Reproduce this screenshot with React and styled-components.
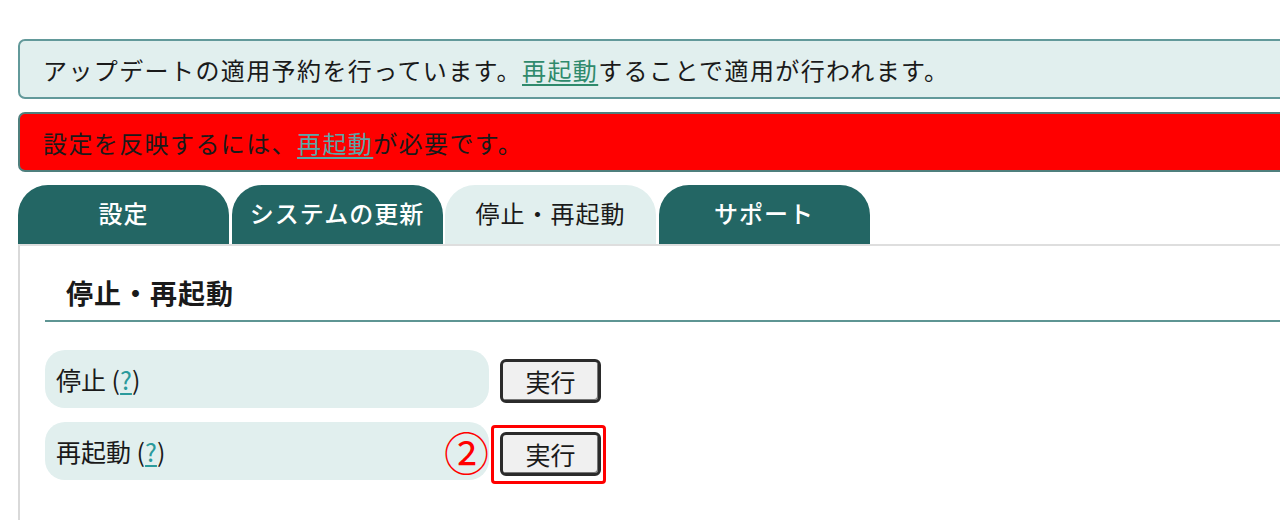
import React from 'react';
import styled, { createGlobalStyle } from 'styled-components';

const GlobalStyle = createGlobalStyle`
  html, body {
    margin: 0;
    padding: 0;
    background: #ffffff;
    overflow: hidden;
  }
  body {
    font-family: "Noto Sans CJK JP", "Noto Sans", sans-serif;
    color: #222;
  }
`;

const Page = styled.div`
  width: 1320px;
  padding: 39px 0 0 18px;
  display: flex;
  flex-direction: column;
`;

const Notice = styled.div`
  height: 60px;
  box-sizing: border-box;
  display: flex;
  align-items: center;
  padding-left: 23px;
  margin-bottom: 13px;
  border: 2px solid ${(p) => (p.$alert ? '#4f7f7d' : '#62999a')};
  border-radius: 7px;
  background: ${(p) => (p.$alert ? '#ff0000' : '#e1efee')};
  font-size: 24px;
  letter-spacing: 1.4px;
  color: #1a1a1a;
`;

const NoticeLink = styled.a`
  color: ${(p) => (p.$alert ? '#5aa6a8' : '#2f8a6c')};
  text-decoration: underline;
  text-underline-offset: 4px;
`;

const Tabs = styled.div`
  display: flex;
  gap: 2.5px;
`;

const Tab = styled.div`
  width: 211px;
  height: 59px;
  box-sizing: border-box;
  display: flex;
  align-items: center;
  justify-content: center;
  padding-bottom: 4px;
  border-radius: 30px 30px 0 0;
  background: ${(p) => (p.$active ? '#e1efee' : '#236664')};
  color: ${(p) => (p.$active ? '#1a1a1a' : '#ffffff')};
  font-size: 24px;
  font-weight: ${(p) => (p.$active ? 400 : 500)};
  letter-spacing: 1px;
`;

const Panel = styled.div`
  border-left: 2px solid #d9d9d9;
  border-top: 2px solid #dedede;
  padding: 27px 0 40px 25px;
`;

const Heading = styled.h2`
  margin: 0 0 28px;
  padding: 0 0 8px 21px;
  border-bottom: 2px solid #5e9593;
  font-size: 27px;
  font-weight: 700;
  letter-spacing: 1px;
  color: #1a1a1a;
`;

const Rows = styled.div`
  display: flex;
  flex-direction: column;
  gap: 14px;
`;

const Row = styled.div`
  display: flex;
  align-items: center;
  gap: 11px;
`;

const Label = styled.div`
  position: relative;
  width: 444px;
  height: 58px;
  box-sizing: border-box;
  display: flex;
  align-items: center;
  padding-left: 11px;
  border-radius: 20px;
  background: #e1efee;
  font-size: 25px;
  color: #1a1a1a;
`;

const Help = styled.a`
  color: #2a9a9c;
  text-decoration: underline;
  text-underline-offset: 3px;
`;

const ButtonWrap = styled.div`
  position: relative;
  display: flex;
  margin-top: ${(p) => (p.$shift ? '6px' : '4px')};
`;

const RunButton = styled.button`
  width: 101px;
  height: 44px;
  box-sizing: border-box;
  border: 3px solid #2b2b2b;
  border-radius: 6px;
  background: #f0f0f0;
  font-family: "Noto Sans CJK JP", "Noto Sans", sans-serif;
  font-size: 25px;
  line-height: 1;
  color: #1a1a1a;
  padding: 0;
  box-shadow: inset -1px -1px 0 #777;
`;

const Highlight = styled.span`
  position: absolute;
  left: -9px;
  top: -7px;
  right: -5px;
  bottom: -8px;
  border: 3px solid #ff0000;
  border-radius: 4px;
  pointer-events: none;
`;

const Marker = styled.span`
  position: absolute;
  right: 0;
  top: 50%;
  transform: translateY(-50%);
  color: #ff0000;
  font-size: 45px;
  line-height: 1;
`;

const tabs = ['設定', 'システムの更新', '停止・再起動', 'サポート'];

export default function App() {
  return (
    <>
      <GlobalStyle />
      <Page>
        <Notice>
          アップデートの適用予約を行っています。<NoticeLink>再起動</NoticeLink>することで適用が行われます。
        </Notice>
        <Notice $alert>
          設定を反映するには、<NoticeLink $alert>再起動</NoticeLink>が必要です。
        </Notice>
        <Tabs>
          {tabs.map((t) => (
            <Tab key={t} $active={t === '停止・再起動'}>{t}</Tab>
          ))}
        </Tabs>
        <Panel>
          <Heading>停止・再起動</Heading>
          <Rows>
            <Row>
              <Label>停止 (<Help>?</Help>)</Label>
              <ButtonWrap>
                <RunButton>実行</RunButton>
              </ButtonWrap>
            </Row>
            <Row>
              <Label>
                再起動 (<Help>?</Help>)
                <Marker>②</Marker>
              </Label>
              <ButtonWrap $shift>
                <RunButton>実行</RunButton>
                <Highlight />
              </ButtonWrap>
            </Row>
          </Rows>
        </Panel>
      </Page>
    </>
  );
}
